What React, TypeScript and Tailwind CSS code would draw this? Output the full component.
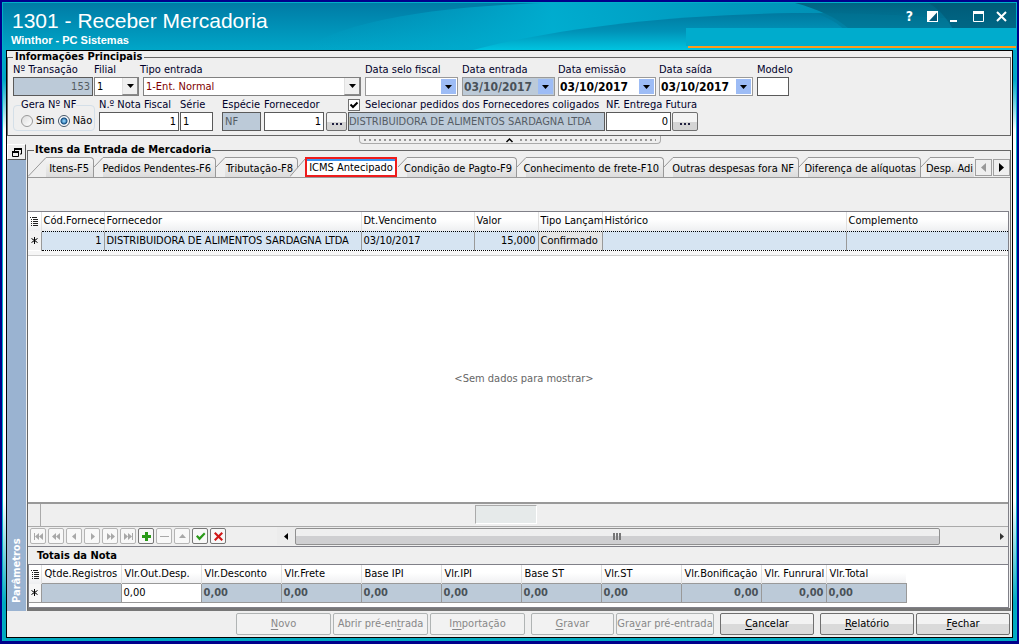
import { Fragment, useState, type ReactNode } from 'react';
import { clsx } from 'clsx';

const tabs = [
  { label: 'Itens-F5', width: 'w-[66px]' },
  { label: 'Pedidos Pendentes-F6', width: 'w-[122px]' },
  { label: 'Tributação-F8', width: 'w-[82px]' },
  { label: 'ICMS Antecipado', width: 'w-[92px]' },
  { label: 'Condição de Pagto-F9', width: 'w-[119px]' },
  { label: 'Conhecimento de frete-F10', width: 'w-[147px]' },
  { label: 'Outras despesas fora NF', width: 'w-[135px]' },
  { label: 'Diferença de alíquotas', width: 'w-[122px]' },
  { label: 'Desp. Adi', width: 'w-[57px]' },
];

const gridColumns = [
  { label: 'Cód.Fornece', width: 'w-[63px]', value: '1', right: true },
  { label: 'Fornecedor', width: 'w-[257px]', value: 'DISTRIBUIDORA DE ALIMENTOS SARDAGNA LTDA' },
  { label: 'Dt.Vencimento', width: 'w-[113px]', value: '03/10/2017' },
  { label: 'Valor', width: 'w-[64px]', value: '15,000', right: true },
  { label: 'Tipo Lançam', width: 'w-[64px]', value: 'Confirmado', gray: true },
  { label: 'Histórico', width: 'w-[244px]', value: '' },
  { label: 'Complemento', width: '', value: '' },
];

const totals = [
  { label: 'Qtde.Registros', width: 'w-[80px]', value: '' },
  { label: 'Vlr.Out.Desp.', width: 'w-[80px]', value: '0,00', editable: true },
  { label: 'Vlr.Desconto', width: 'w-[80px]', value: '0,00' },
  { label: 'Vlr.Frete', width: 'w-[80px]', value: '0,00' },
  { label: 'Base IPI', width: 'w-[80px]', value: '0,00' },
  { label: 'Vlr.IPI', width: 'w-[80px]', value: '0,00' },
  { label: 'Base ST', width: 'w-[80px]', value: '0,00' },
  { label: 'Vlr.ST', width: 'w-[80px]', value: '0,00' },
  { label: 'Vlr.Bonificação', width: 'w-[80px]', value: '0,00', right: true },
  { label: 'Vlr. Funrural', width: 'w-[65px]', value: '0,00', right: true },
  { label: 'Vlr.Total', width: 'w-[80px]', value: '0,00' },
];

const navButtons = [
  { name: 'Primeiro', d: 'M2 3h1v7h-1zM7 3v7l-4-3.5zM11 3v7l-4-3.5z' },
  { name: 'Página anterior', d: 'M6 3v7l-4-3.5zM10 3v7l-4-3.5z' },
  { name: 'Anterior', d: 'M8 3v7l-4-3.5z' },
  { name: 'Próximo', d: 'M5 3v7l4-3.5z' },
  { name: 'Próxima página', d: 'M3 3v7l4-3.5zM7 3v7l4-3.5z' },
  { name: 'Último', d: 'M2 3v7l4-3.5zM6 3v7l4-3.5zM10 3h1v7h-1z' },
  { name: 'Inserir', d: 'M5 2h3v3h3v3h-3v3h-3v-3h-3v-3h3z', color: 'text-[#2a9a18]' },
  { name: 'Excluir', d: 'M2 6h9v1h-9z' },
  { name: 'Editar', d: 'M3 8h7l-3.5-4z' },
  { name: 'Confirmar', d: 'M2 6.5l1.500-1.500 2 2 4.500-4.500 1.500 1.500-6 6.500z', color: 'text-[#2a9a18]' },
  { name: 'Cancelar edição', d: 'M2 3.500l1.500-1.500 3 3 3-3 1.500 1.500-3 3 3 3-1.500 1.500-3-3-3 3-1.500-1.500 3-3z', color: 'text-[#d01818]' },
];

const actions = [
  { before: '', key: 'N', after: 'ovo', width: 'w-[95px]', disabled: true },
  { before: 'Abrir pré-en', key: 't', after: 'rada', width: 'w-[95px] ml-0.5', disabled: true },
  { before: 'I', key: 'm', after: 'portação', width: 'w-[95px] ml-0.5', disabled: true },
  { before: '', key: 'G', after: 'ravar', width: 'w-[83px] ml-1.5', disabled: true },
  { before: 'Gra', key: 'v', after: 'ar pré-entrada', width: 'w-[98px] ml-0.5', disabled: true },
  { before: '', key: 'C', after: 'ancelar', width: 'w-[94px] ml-1.5' },
  { before: '', key: 'R', after: 'elatório', width: 'w-[94px] ml-1.5' },
  { before: '', key: 'F', after: 'echar', width: 'w-[94px] ml-0.5' },
];

function Field({ id, label, className, children }: { id: string; label: string; className?: string; children: ReactNode }) {
  return (
    <div className={clsx('flex shrink-0 flex-col', className)}>
      <label htmlFor={id} className="h-[14px] whitespace-nowrap leading-[14px] text-[#00002a]">{label}</label>
      {children}
    </div>
  );
}

function TextBox({ id, value, right, readOnly }: { id: string; value: string; right?: boolean; readOnly?: boolean }) {
  return (
    <input
      id={id}
      defaultValue={value}
      readOnly={readOnly}
      className={clsx(
        'h-[19px] w-full rounded-none border border-[#5a5a5a] px-0.5 outline-none',
        right && 'text-right',
        readOnly ? 'bg-[#bccad8] text-[#555c64]' : 'bg-white text-black'
      )}
    />
  );
}

function Arrow() {
  return (
    <svg width="7" height="4" viewBox="0 0 7 4" aria-hidden="true"><path d="M0 0h7L3.500 4z" fill="#000" /></svg>
  );
}

function Combo({ id, value, className }: { id: string; value: string; className?: string }) {
  return (
    <div className={clsx('relative h-[19px] border border-[#808080] bg-white', className)}>
      <select id={id} className="h-full w-full appearance-none bg-transparent pl-0.5 outline-none">
        <option>{value}</option>
      </select>
      <span className="pointer-events-none absolute inset-y-0 right-0 flex w-4 items-center justify-center border-r border-b border-l border-[#8a8a8a] border-l-[#e0e0e0] bg-[#f0f0f0]">
        <Arrow />
      </span>
    </div>
  );
}

function DateBox({ id, value, readOnly }: { id: string; value: string; readOnly?: boolean }) {
  return (
    <div className={clsx('flex h-[19px] border border-[#9a9a9a] p-px', readOnly ? 'bg-[#bccad8]' : 'bg-white')}>
      <input
        id={id}
        defaultValue={value}
        readOnly={readOnly}
        className={clsx('min-w-0 flex-1 text-xs font-bold outline-none', readOnly ? 'text-[#4a5258]' : 'text-black')}
      />
      <button type="button" aria-label="Abrir calendário" className="flex w-[15px] shrink-0 items-center justify-center bg-[#9dbcf5]">
        <Arrow />
      </button>
    </div>
  );
}

function LookupButton({ label }: { label: string }) {
  return (
    <button type="button" aria-label={label} className="flex h-[19px] w-full items-center justify-center gap-0.5 rounded-xs border border-[#707070] bg-linear-to-b from-[#f4f4f4] from-50% to-[#d4d4d4] to-50%">
      <span className="mt-1 size-0.5 bg-[#202040]" />
      <span className="mt-1 size-0.5 bg-[#202040]" />
      <span className="mt-1 size-0.5 bg-[#202040]" />
    </button>
  );
}

function TitleBar() {
  return (
    <header className="relative flex h-[47px] justify-between overflow-hidden bg-linear-to-b from-[#007ba5] to-[#00a6c8]">
      <svg className="absolute inset-0 h-full w-full" viewBox="0 0 1013 47" preserveAspectRatio="none" aria-hidden="true">
        <defs>
          <linearGradient id="glow" x1="0" y1="0" x2="1" y2="0">
            <stop offset="0" stopColor="#00a8cb" stopOpacity="0" />
            <stop offset="0.35" stopColor="#00b0d2" stopOpacity="0.9" />
            <stop offset="0.6" stopColor="#0098bd" />
            <stop offset="1" stopColor="#0084a8" />
          </linearGradient>
          <linearGradient id="wave" x1="0" y1="0" x2="0" y2="1">
            <stop offset="0" stopColor="#0079a0" />
            <stop offset="0.5" stopColor="#0093b8" />
            <stop offset="1" stopColor="#00c4e0" />
          </linearGradient>
          <linearGradient id="dark" x1="0" y1="0" x2="0" y2="1">
            <stop offset="0" stopColor="#005876" />
            <stop offset="1" stopColor="#007898" />
          </linearGradient>
        </defs>
        <path d="M300 47C330 25 400 5 540 0H1013V47Z" fill="url(#glow)" />
        <path d="M470 47C550 26 660 12 790 10C880 10 960 14 1013 20V47Z" fill="url(#wave)" />
        <path d="M792 0C815 6 832 14 845 25H1013V0Z" fill="url(#dark)" opacity="0.8" />
        <path d="M812 10C880 10 950 14 1013 22V30H845C835 20 825 14 812 10Z" fill="#007898" opacity="0.5" />
        <path d="M926 0C938 8 944 16 950 26H1013V0Z" fill="#005470" opacity="0.5" />
      </svg>
      <div className="relative pl-2 font-['Liberation_Sans',sans-serif] text-white">
        <h1 className="mt-[6px] pl-px text-[21px] leading-6">1301 - Receber Mercadoria</h1>
        <p className="mt-px text-[11px] leading-3 font-bold">Winthor - PC Sistemas</p>
      </div>
      <div className="relative flex w-[330px] flex-col">
        <div className="flex h-[25px] shrink-0 items-end justify-end pr-[9px] pb-[6px] text-white">
          <button type="button" aria-label="Ajuda" className="mr-3.5 text-sm leading-3 font-bold">?</button>
          <button type="button" aria-label="Alternar tema" className="mr-3">
            <svg width="11" height="11" viewBox="0 0 11 11"><path d="M0 0h11v11H0z" fill="#fff" /><path d="M10 1.500v8.500H2z" fill="#00587a" /></svg>
          </button>
          <button type="button" aria-label="Minimizar" className="mr-4">
            <svg width="7" height="11" viewBox="0 0 7 11"><path d="M0 9h7v2H0z" fill="#fff" /></svg>
          </button>
          <button type="button" aria-label="Maximizar" className="mr-3">
            <svg width="11" height="11" viewBox="0 0 11 11"><path d="M0.500 1.500h10v9H0.500z" fill="none" stroke="#fff" /><path d="M0 0h11v3H0z" fill="#fff" /></svg>
          </button>
          <button type="button" aria-label="Fechar janela">
            <svg width="11" height="11" viewBox="0 0 11 11"><path d="M1 1l9 9M10 1l-9 9" stroke="#fff" strokeWidth="2" /></svg>
          </button>
        </div>
        <div className="h-[18px] bg-[#00accd]" />
        <div className="ml-0.5 h-0.5 bg-[#ff9a1a]" />
      </div>
    </header>
  );
}

function MainInfo() {
  return (
    <fieldset className="mr-px min-w-0 border border-[#666] pb-1 pl-[5px]">
      <legend className="px-0.5 leading-3 font-bold">Informações Principais</legend>
      <div className="flex">
        <Field id="transacao" label="Nº Transação" className="w-[80px]"><TextBox id="transacao" value="153" right readOnly /></Field>
        <Field id="filial" label="Filial" className="ml-px w-[45px]"><Combo id="filial" value="1" /></Field>
        <Field id="tipo" label="Tipo entrada" className="ml-px w-[221px]"><Combo id="tipo" value="1-Ent. Normal" className="ml-[3px] text-[#800000]" /></Field>
        <Field id="selo" label="Data selo fiscal" className="ml-1 w-[93px]"><DateBox id="selo" value="" /></Field>
        <Field id="entrada" label="Data entrada" className="ml-1 w-[93px]"><DateBox id="entrada" value="03/10/2017" readOnly /></Field>
        <Field id="emissao" label="Data emissão" className="ml-[3px] w-[98px]"><DateBox id="emissao" value="03/10/2017" /></Field>
        <Field id="saida" label="Data saída" className="ml-[3px] w-[94px]"><DateBox id="saida" value="03/10/2017" /></Field>
        <Field id="modelo" label="Modelo" className="ml-1 w-8"><TextBox id="modelo" value="" /></Field>
      </div>
      <div className="flex items-end pt-0.5">
        <fieldset className="w-[82px] shrink-0 rounded border border-[#d4dfe8] pl-[7px]">
          <legend className="leading-3 whitespace-nowrap text-[#00002a]">Gera Nº NF</legend>
          <div className="flex h-[19px] items-center whitespace-nowrap">
            <input id="nf-sim" type="radio" name="gera" className="size-3 shrink-0 appearance-none rounded-full border border-[#999] bg-linear-to-br from-[#ddd] to-white" />
            <label htmlFor="nf-sim" className="ml-[3px]">Sim</label>
            <input
              id="nf-nao"
              type="radio"
              name="gera"
              defaultChecked
              className="ml-[3px] size-3 shrink-0 appearance-none rounded-full border border-[#456] bg-white checked:bg-[radial-gradient(circle,#7fc4f0_0_1px,#124c80_3px,#fff_4px)]"
            />
            <label htmlFor="nf-nao" className="ml-[3px]">Não</label>
          </div>
        </fieldset>
        <Field id="nota" label="N.º Nota Fiscal" className="ml-1 w-[80px]"><TextBox id="nota" value="1" right /></Field>
        <Field id="serie" label="Série" className="ml-px w-[33px]"><TextBox id="serie" value="1" /></Field>
        <Field id="especie" label="Espécie" className="ml-[9px] w-[39px]"><TextBox id="especie" value="NF" readOnly /></Field>
        <Field id="fornecedor" label="Fornecedor" className="ml-[3px] w-[60px]"><TextBox id="fornecedor" value="1" right /></Field>
        <div className="ml-0.5 w-[21px] shrink-0"><LookupButton label="Buscar fornecedor" /></div>
        <div className="ml-px w-[257px] shrink-0">
          <div className="flex h-[14px] items-center">
            <input
              id="coligados"
              type="checkbox"
              defaultChecked
              className="size-3 appearance-none border border-[#707070] bg-white checked:bg-[url('data:image/svg+xml,%3Csvg%20xmlns=%22http://www.w3.org/2000/svg%22%20viewBox=%220%200%2010%2010%22%3E%3Cpath%20d=%22M1.500%204.500l2.500%202.500%204.500-4.500%22%20fill=%22none%22%20stroke=%22black%22%20stroke-width=%222%22/%3E%3C/svg%3E')]"
            />
            <label htmlFor="coligados" className="ml-[5px] whitespace-nowrap text-[#00002a]">Selecionar pedidos dos Fornecedores coligados</label>
          </div>
          <input aria-label="Nome do fornecedor" readOnly defaultValue="DISTRIBUIDORA DE ALIMENTOS SARDAGNA LTDA" className="block h-[19px] w-full border border-[#5a5a5a] bg-[#bccad8] text-[#555c64] outline-none" />
        </div>
        <Field id="futura" label="NF. Entrega Futura" className="ml-px w-[65px]"><TextBox id="futura" value="0" right /></Field>
        <div className="ml-px w-[26px] shrink-0"><LookupButton label="Buscar nota de entrega futura" /></div>
      </div>
    </fieldset>
  );
}

function Splitter() {
  return (
    <button type="button" aria-label="Recolher informações" className="mx-auto flex h-2 w-[302px] items-center rounded-b border border-t-0 border-[#aaa] px-1">
      <span className="h-0.5 flex-1 bg-[repeating-linear-gradient(90deg,#999_0_2px,transparent_2px_5px)]" />
      <svg className="mx-1.5" width="9" height="6" viewBox="0 0 9 6" aria-hidden="true"><path d="M1.500 5l3-3 3 3" fill="none" stroke="#000" strokeWidth="1.500" /></svg>
      <span className="h-0.5 flex-1 bg-[repeating-linear-gradient(90deg,#999_0_2px,transparent_2px_5px)]" />
    </button>
  );
}

function TabStrip() {
  const [active, setActive] = useState(3);
  return (
    <div className="flex h-[22px] shrink-0 items-end border-b border-[#999]">
      <div role="tablist" className="flex h-[20px] min-w-0 flex-1 overflow-hidden">
        {tabs.map((tab, i) =>
          i === active ? (
            <Fragment key={tab.label}>
              <svg className="relative -ml-2 shrink-0" width="15" height="20" viewBox="0 0 15 20" aria-hidden="true">
                <path d="M0 20L15 2V20Z" fill="#efefef" />
                <path d="M0 19.500L15 2" fill="none" stroke="#999" />
              </svg>
              <button type="button" role="tab" aria-selected="true" className={clsx(tab.width, 'mr-px h-5 shrink-0 border-2 border-[#ee1c1c] bg-white whitespace-nowrap')}>
                <span className="flex h-full items-center justify-center border-t-2 border-[#3a94f0]">{tab.label}</span>
              </button>
            </Fragment>
          ) : (
            <button key={tab.label} type="button" role="tab" aria-selected="false" onClick={() => setActive(i)} className={clsx(tab.width, 'flex h-5 shrink-0 whitespace-nowrap')}>
              <svg className="shrink-0" width={i === 0 ? 18 : 9} height="20" viewBox={i === 0 ? '0 0 18 20' : '0 0 9 20'} aria-hidden="true">
                <path d={i === 0 ? 'M0 20L18 0V20Z' : 'M0 20V10L9 0V20Z'} fill="#efefef" />
                <path d={i === 0 ? 'M0 19.500L18 0.500' : 'M0 10L9 0.500'} fill="none" stroke="#999" />
              </svg>
              <span className="flex h-full min-w-0 flex-1 items-center justify-end rounded-tr-sm border-t border-r border-[#999] bg-linear-to-b from-[#f6f6f6] to-[#dcdcdc] pt-0.5 pr-1">{tab.label}</span>
            </button>
          )
        )}
      </div>
      <div className="mb-px ml-px flex shrink-0 gap-px">
        <button type="button" aria-label="Abas anteriores" className="flex h-[17px] w-[17px] items-center justify-center border border-[#a0a0a0]">
          <svg width="5" height="9" viewBox="0 0 5 9"><path d="M5 0v9L0 4.500z" fill="#999" /></svg>
        </button>
        <button type="button" aria-label="Próximas abas" className="flex h-[17px] w-[17px] items-center justify-center border border-[#a0a0a0]">
          <svg width="5" height="9" viewBox="0 0 5 9"><path d="M0 0v9l5-4.500z" fill="#000" /></svg>
        </button>
      </div>
    </div>
  );
}

function ListMark() {
  return (
    <svg className="mx-auto" width="8" height="9" viewBox="0 0 8 9" aria-hidden="true">
      <path d="M0 0h1v1H0zM2 0h5v1H2zM1 2h1v1H1zM3 2h5v1H3zM1 4h1v1H1zM3 4h5v1H3zM1 6h1v1H1zM3 6h5v1H3zM1 8h1v1H1zM3 8h5v1H3z" fill="#222" />
    </svg>
  );
}

function RowMark() {
  return (
    <svg className="mx-auto" width="7" height="7" viewBox="0 0 7 7" aria-hidden="true">
      <path d="M3.500 0v7M0.500 1.500l6 4M6.500 1.500l-6 4" stroke="#000" />
    </svg>
  );
}

function ItemsGrid() {
  return (
    <div className="mr-px flex flex-1 flex-col border-t border-r border-[#808088] bg-white">
      <table className="w-full table-fixed border-collapse">
        <thead>
          <tr className="h-[19px] bg-linear-to-b from-white from-40% to-[#eeeff1]">
            <th className="w-[13px] p-0"><ListMark /></th>
            {gridColumns.map((col) => (
              <th key={col.label} className={clsx(col.width, 'border-l border-[#e0e0e0] p-0 pl-0.5 text-left font-normal whitespace-nowrap')}>{col.label}</th>
            ))}
          </tr>
        </thead>
        <tbody>
          <tr className="h-[19px]">
            <td className="border-r border-[#999] bg-[#f2f2f2] p-0"><RowMark /></td>
            {gridColumns.map((col) => (
              <td
                key={col.label}
                className={clsx(
                  'border-y border-l border-y-black border-l-[#999] p-0 px-0.5 whitespace-nowrap [border-block-style:dotted]',
                  col.right && 'text-right',
                  col.gray ? 'bg-[#e4e4e4]' : 'bg-[#d6e4f2]'
                )}
              >
                {col.value}
              </td>
            ))}
          </tr>
        </tbody>
      </table>
      <div className="h-[5px] border-b border-[#ccc] bg-[#f6f6f6]" />
      <p className="flex flex-1 items-center justify-center pl-3 text-[#666]">&lt;Sem dados para mostrar&gt;</p>
      <div className="flex h-[25px] border-t-2 border-b border-t-[#999] border-b-[#aaa] bg-[#efefef]">
        <span className="w-[13px] border-r border-[#aaa]" />
        <span className="mt-px ml-[434px] h-[19px] w-[62px] border border-[#aaa] border-r-white border-b-white bg-[#e6eaea]" />
      </div>
    </div>
  );
}

function Navigator() {
  return (
    <div className="mr-px flex h-5 shrink-0 items-center border-r border-b border-[#808088] pl-0.5">
      <div className="flex gap-0.5">
        {navButtons.map((btn) => (
          <button
            key={btn.name}
            type="button"
            aria-label={btn.name}
            disabled={!btn.color}
            className={clsx('flex size-4 items-center justify-center rounded-xs border bg-[#f8f8f8]', btn.color ? 'border-[#777]' : 'border-[#b4b4b4]', btn.color ?? 'text-[#a8a8a8]')}
          >
            <svg width="13" height="13" viewBox="0 0 13 13" aria-hidden="true"><path d={btn.d} fill="currentColor" /></svg>
          </button>
        ))}
      </div>
      <div className="ml-[51px] flex h-[18px] flex-1 items-center bg-[#ececec]">
        <button type="button" aria-label="Rolar para a esquerda" className="flex w-[18px] justify-center">
          <svg width="4" height="7" viewBox="0 0 4 7"><path d="M4 0v7L0 3.500z" fill="#000" /></svg>
        </button>
        <div className="flex-1">
          <div className="flex h-[17px] w-[92%] items-center justify-center gap-px rounded-xs border border-[#909090] bg-linear-to-b from-[#efefef] from-50% to-[#cfcfd1] to-50%">
            <span className="h-[7px] w-0.5 bg-[#777]" />
            <span className="h-[7px] w-0.5 bg-[#777]" />
            <span className="h-[7px] w-0.5 bg-[#777]" />
          </div>
        </div>
        <button type="button" aria-label="Rolar para a direita" className="flex w-3 justify-center">
          <svg width="4" height="7" viewBox="0 0 4 7"><path d="M0 0v7l4-3.500z" fill="#333" /></svg>
        </button>
      </div>
    </div>
  );
}

function Totals() {
  return (
    <section className="mr-px flex flex-col border-r border-[#808088]">
      <h2 className="h-[18px] border-b border-[#808088] pl-[9px] leading-[18px] font-bold">Totais da Nota</h2>
      <div className="border-b border-l border-[#808088] bg-white pb-1">
        <table className="w-[877px] table-fixed border-collapse">
          <thead>
            <tr className="h-[19px] bg-linear-to-b from-white from-40% to-[#eeeff1]">
              <th className="w-3 p-0"><ListMark /></th>
              {totals.map((col) => (
                <th key={col.label} className={clsx(col.width, 'border-l border-[#e0e0e0] p-0 pl-[3px] text-left font-normal whitespace-nowrap')}>{col.label}</th>
              ))}
            </tr>
          </thead>
          <tbody>
            <tr className="h-[19px]">
              <td className="border-b border-[#999] bg-[#f6f6f6] p-0"><RowMark /></td>
              {totals.map((col) => (
                <td
                  key={col.label}
                  className={clsx(
                    'border border-[#999] p-0 px-0.5',
                    col.right && 'text-right',
                    col.editable ? 'bg-white' : 'bg-[#bccad8] font-bold text-[#4a5258]'
                  )}
                >
                  {col.value}
                </td>
              ))}
            </tr>
          </tbody>
        </table>
      </div>
    </section>
  );
}

export default function App() {
  return (
    <div className="flex min-h-screen flex-col border-2 border-b-[3px] border-[#00008b] font-['DejaVu_Sans_Condensed','DejaVu_Sans',sans-serif] text-[11px] leading-[14px] text-black">
      <div className="flex flex-1 flex-col border border-b-0 border-[#00b0c8] bg-[linear-gradient(#00a6c8_12%,#fff_20%,#fff_78%,#00a9c0_94%)]">
        <TitleBar />
        <main className="mx-[3px] mb-[3px] flex flex-1 flex-col border border-black bg-[#efefef]">
          <MainInfo />
          <Splitter />
          <div className="flex flex-1">
            <aside className="flex w-5 shrink-0 flex-col">
              <button type="button" aria-label="Restaurar painel" className="flex h-4 w-[19px] items-center justify-center border border-t-white border-r-[#555] border-b-[#555] border-l-white">
                <svg width="10" height="9" viewBox="0 0 10 9" aria-hidden="true"><path d="M2.500 3V1h7v5H8M0.500 4.500h6v4h-6z" fill="none" stroke="#000" /><path d="M2 0h8v2H2zM0 3h7v2H0z" /></svg>
              </button>
              <div className="flex w-[19px] flex-1 rotate-180 items-center justify-start bg-[#9ab3d1] [writing-mode:vertical-rl]">
                <span className="pt-2 font-bold text-white">Parâmetros</span>
              </div>
            </aside>
            <fieldset className="mr-px flex min-w-0 flex-1 flex-col border border-b-[3px] border-[#666] border-b-[#777]">
              <legend className="ml-1.5 px-px leading-3 font-bold">Itens da Entrada de Mercadoria</legend>
              <TabStrip />
              <div className="h-[33px] shrink-0" />
              <ItemsGrid />
              <Navigator />
              <Totals />
            </fieldset>
          </div>
          <footer className="flex h-[26px] shrink-0 items-center justify-end pr-0.5">
            {actions.map((action) => (
              <button
                key={action.before + action.key + action.after}
                type="button"
                disabled={action.disabled}
                className={clsx(
                  action.width,
                  'h-[22px] shrink-0 rounded-xs border whitespace-nowrap',
                  action.disabled ? 'border-[#b0b4b4] bg-[#f2f2f2] text-[#888]' : 'border-[#707070] bg-linear-to-b from-[#f3f3f3] from-50% to-[#dadada] to-50%'
                )}
              >
                {action.before}<span className="underline underline-offset-2">{action.key}</span>{action.after}
              </button>
            ))}
          </footer>
        </main>
      </div>
    </div>
  );
}
